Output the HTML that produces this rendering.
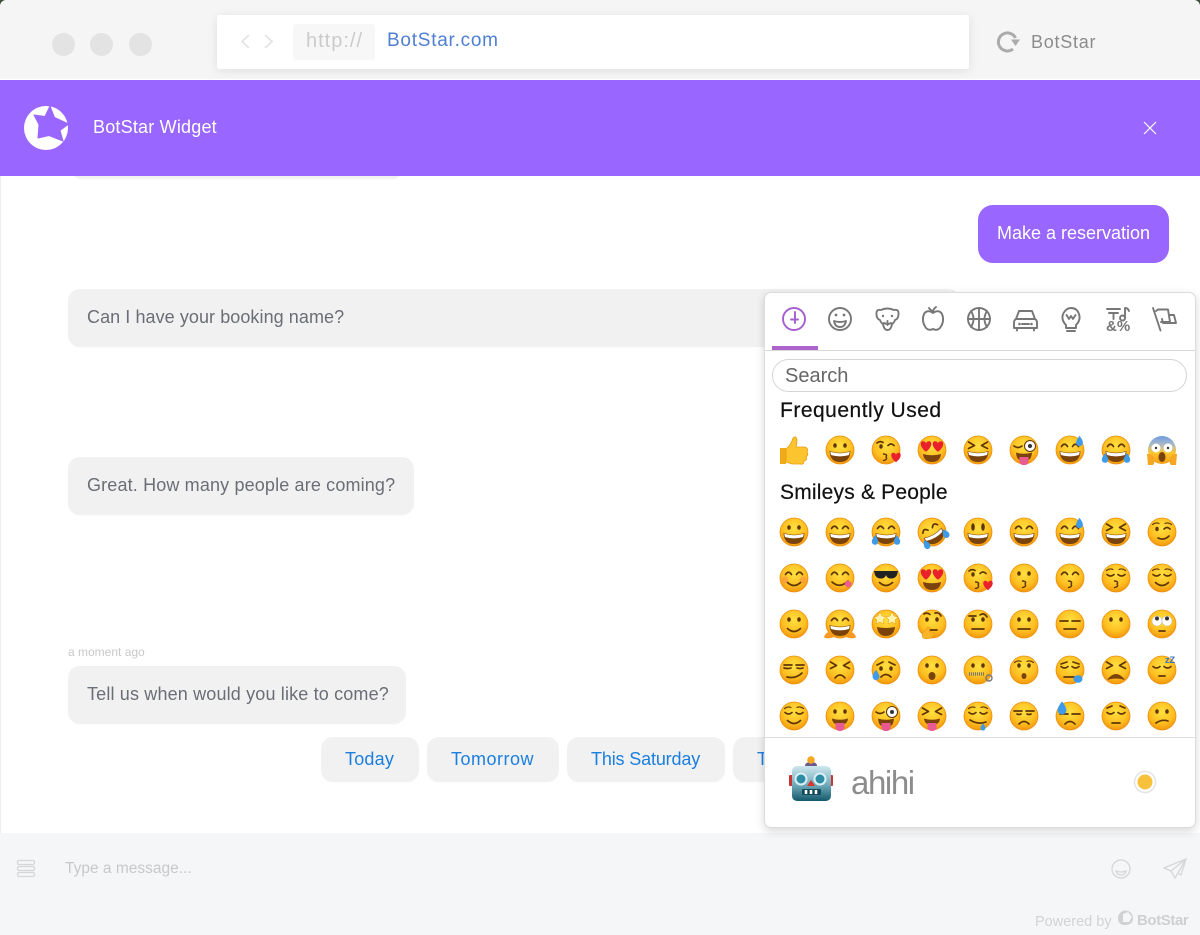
<!DOCTYPE html>
<html lang="en"><head><meta charset="utf-8"><title>BotStar Widget</title>
<style>
*{box-sizing:border-box}
html,body{margin:0;padding:0;background:#fff}
#p{position:relative;width:1200px;height:935px;overflow:hidden;background:#fff;font-family:"Liberation Sans",sans-serif}
#p div,#p span{position:absolute;white-space:nowrap}
.t{line-height:24px;height:24px}
.b{background:#f2f1f2;border-radius:12px;box-shadow:0 1px 1px rgba(0,0,0,.015)}
.m{font-size:18px;color:#6a6e75}
.q{font-size:18px;color:#1b7fe0}
svg{position:absolute;left:0;top:0;pointer-events:none}
.s{fill:none;stroke:#5f360a;stroke-width:1.7;stroke-linecap:round;stroke-linejoin:round}
.i{fill:none;stroke:#777;stroke-width:1.9;stroke-linecap:round;stroke-linejoin:round}
.d{fill:#5f360a}
</style></head><body><div id="p">
<div style="left:0;top:0;width:1200px;height:79px;background:#f5f5f5"></div>
<div style="left:52px;top:33px;width:23px;height:23px;border-radius:50%;background:#e3e3e3"></div>
<div style="left:90px;top:33px;width:23px;height:23px;border-radius:50%;background:#e3e3e3"></div>
<div style="left:129px;top:33px;width:23px;height:23px;border-radius:50%;background:#e3e3e3"></div>
<div style="left:217px;top:15px;width:752px;height:54px;background:#fff;border-radius:2px;box-shadow:0 2px 10px rgba(0,0,0,.09)"></div>
<div style="left:293px;top:24px;width:82px;height:36px;background:#f7f7f7;border-radius:3px"></div>
<span class="t" style="left:306px;top:29px;font-size:20px;color:#cbcbcb;letter-spacing:1px">http://</span>
<span class="t" style="left:387px;top:29px;font-size:19px;color:#4f7fd3;letter-spacing:.75px">BotStar.com</span>
<span class="t" style="left:1031px;top:30px;font-size:18px;color:#8c8c8c;letter-spacing:.75px">BotStar</span>
<div class="b" style="left:72px;top:160px;width:330px;height:19px"></div>
<div style="left:0;top:80px;width:1200px;height:96px;background:#9966ff"></div>
<span class="t" style="left:93px;top:115px;font-size:18px;color:#fff;letter-spacing:.2px">BotStar Widget</span>
<div style="left:978px;top:205px;width:191px;height:58px;background:#9966ff;border-radius:15px"></div>
<span class="t" style="left:997px;top:221px;font-size:18px;color:#fff">Make a reservation</span>
<div class="b" style="left:68px;top:289px;width:892px;height:58px"></div>
<span class="t m" style="left:87px;top:305px;letter-spacing:.07px">Can I have your booking name?</span>
<div class="b" style="left:68px;top:457px;width:346px;height:58px"></div>
<span class="t m" style="left:87px;top:473px;letter-spacing:.15px">Great. How many people are coming?</span>
<span class="t" style="left:68px;top:640px;font-size:12px;color:#c9c9c9">a moment ago</span>
<div class="b" style="left:68px;top:666px;width:338px;height:58px"></div>
<span class="t m" style="left:87px;top:682px;letter-spacing:.16px">Tell us when would you like to come?</span>
<div class="b" style="left:321px;top:737px;width:98px;height:45px"></div>
<span class="t q" style="left:345px;top:747px;letter-spacing:.2px">Today</span>
<div class="b" style="left:427px;top:737px;width:132px;height:45px"></div>
<span class="t q" style="left:451px;top:747px;letter-spacing:.5px">Tomorrow</span>
<div class="b" style="left:567px;top:737px;width:158px;height:45px"></div>
<span class="t q" style="left:591px;top:747px;letter-spacing:-.15px">This Saturday</span>
<div class="b" style="left:733px;top:737px;width:120px;height:45px"></div>
<span class="t q" style="left:757px;top:747px">T</span>
<div style="left:0;top:176px;width:1px;height:657px;background:#eee"></div>
<div style="left:0;top:833px;width:1200px;height:102px;background:#f5f6f8"></div>
<span class="t" style="left:65px;top:857px;font-size:15.5px;color:#c6c8ca">Type a message...</span>
<span class="t" style="left:1035px;top:910px;font-size:14.5px;color:#d2d3d5">Powered by</span>
<span class="t" style="left:1137px;top:909px;font-size:15px;font-weight:bold;color:#cfd0d2;letter-spacing:-.4px">BotStar</span>
<div style="left:764px;top:292px;width:432px;height:536px;background:#fff;border:1px solid #dcdcdc;border-radius:7px;box-shadow:0 3px 9px rgba(0,0,0,.16)"></div>
<div style="left:765px;top:350px;width:430px;height:1px;background:#d8d8d8"></div>
<div style="left:772px;top:346px;width:46px;height:4px;background:#ad62cc"></div>
<div style="left:772px;top:359px;width:415px;height:33px;border:1px solid #d4d4d4;border-radius:17px;background:#fff"></div>
<span class="t" style="left:785px;top:364px;font-size:20px;color:#666">Search</span>
<span class="t" style="left:780px;top:399px;font-size:21px;color:#111;letter-spacing:.5px;-webkit-text-stroke:.2px #111">Frequently Used</span>
<span class="t" style="left:780px;top:481px;font-size:21px;color:#111;letter-spacing:.2px;-webkit-text-stroke:.2px #111">Smileys &amp; People</span>
<div style="left:765px;top:737px;width:430px;height:1px;background:#dedede"></div>
<span style="left:851px;top:762px;font-size:33px;line-height:42px;color:#8c8c8c;letter-spacing:-1.4px">ahihi</span>

<svg width="1200" height="935" viewBox="0 0 1200 935" xmlns="http://www.w3.org/2000/svg">
<defs>
<radialGradient id="fg" cx=".5" cy=".36" r=".66"><stop offset="0" stop-color="#ffe03f"/><stop offset=".62" stop-color="#fdbf22"/><stop offset="1" stop-color="#f2930a"/></radialGradient>
<linearGradient id="rb" x1="0" y1="0" x2="0" y2="1"><stop offset="0" stop-color="#cfe7ee"/><stop offset=".55" stop-color="#6ea9b8"/><stop offset="1" stop-color="#145a6c"/></linearGradient>
<linearGradient id="sc" x1="0" y1="0" x2="0" y2="1"><stop offset="0" stop-color="#6f9be0"/><stop offset=".3" stop-color="#a8b9c8"/><stop offset=".6" stop-color="#fcc62b"/><stop offset="1" stop-color="#f5a012"/></linearGradient>
<circle id="F" r="14" fill="url(#fg)" stroke="#ec8f0c" stroke-width=".8"/>
<g id="ed"><ellipse class="d" cx="-5" cy="-4.5" rx="1.8" ry="2.3"/><ellipse class="d" cx="5" cy="-4.5" rx="1.8" ry="2.3"/></g>
<g id="et"><ellipse class="d" cx="-5" cy="-5" rx="1.8" ry="3.8"/><ellipse class="d" cx="5" cy="-5" rx="1.8" ry="3.8"/></g>
<path id="eh" class="s" d="M-8.500-3.500Q-5.500-8-2.500-3.500M2.500-3.500Q5.500-8 8.500-3.500"/>
<path id="ex" class="s" d="M-9.500-8L-3.500-4.500L-9.500-1.500M9.500-8L3.500-4.500L9.500-1.500"/>
<path id="ec" class="s" d="M-9-3.500Q-5.500-.5-2-3.500M2-3.500Q5.500-.5 9-3.500"/>
<path id="br" class="s" style="stroke-width:1.1" d="M-9.500-7.500Q-6-10-3-8.500M3-8.500Q6-10 9.500-7.500"/>
<g id="mg"><path d="M-10.500 1Q0 4.500 10.500 1Q10 12 0 12Q-10 12-10.500 1Z" fill="#7a430c"/><path d="M-9.800 1.800Q0 4.800 9.800 1.800L9 5Q0 7.800-9 5Z" fill="#fff"/></g>
<path id="ms" class="s" d="M-6.500 4.500Q0 10.500 6.500 4.500"/>
<path id="mk" class="s" style="stroke-width:1.4" d="M-1.500 3Q3 3.500 1 6Q3 8.500-1.500 9.500"/>
<path id="mt" d="M-8 2.500Q0 5 8 2.500Q7.500 9 4.500 10Q4.500 15 0 15Q-4.500 15-4.500 10Q-7.500 9-8 2.500Z" fill="#7a430c"/>
<path id="tg" d="M-4.500 7H4.500V11Q4.500 15 0 15Q-4.500 15-4.500 11Z" fill="#e95a95"/>
<path id="dr" d="M0-6Q4-1 4 2A4 4 0 0 1-4 2Q-4-1 0-6Z" fill="#3e9be8"/>
<path id="ht" d="M0 5C-8-1-6-7-2.500-6C-1-5.800 0-4.500 0-3.500C0-4.500 1-5.800 2.500-6C6-7 8-1 0 5Z" fill="#e8212b"/>
<g id="h"><use href="#F"/><use href="#ex" /><use href="#mg"/></g>
<g id="a1"><use href="#F"/><use href="#ed"/><use href="#mg"/></g>
<g id="a2"><use href="#F"/><use href="#eh"/><use href="#mg"/></g>
<g id="a3"><use href="#a2"/><use href="#dr" transform="translate(-11 8) scale(.8)"/><use href="#dr" transform="translate(11 8) scale(.8)"/></g>
<g id="a6"><use href="#a2"/><use href="#dr" transform="translate(9.500 -9) scale(.85)"/></g>
<g id="kh"><use href="#F"/><path class="s" d="M-9-7Q-6-9.500-3-7.500M2-4.500Q5-7.500 8-4.500"/><ellipse class="d" cx="-5" cy="-3.500" rx="1.700" ry="2.200"/><use href="#mk" transform="translate(-1 1)"/><use href="#ht" transform="translate(10 8) scale(.85)"/></g>
<g id="he"><use href="#F"/><use href="#ht" transform="translate(-6 -3) scale(.95)"/><use href="#ht" transform="translate(6 -3) scale(.95)"/><path d="M-9 4Q0 6.500 9 4Q8 12 0 12Q-8 12-9 4Z" fill="#7a430c"/></g>
<g id="wt"><use href="#F"/><circle cx="6" cy="-4" r="5.500" fill="#fff" stroke="#5f360a"/><circle cx="6" cy="-4" r="2" fill="#333"/><path class="s" d="M-10-4Q-6-1-2-4"/><use href="#mt"/><use href="#tg"/></g>
</defs>

<!-- window corners -->
<path d="M0 0H5Q1 1 0 5Z" fill="#3f4f3c"/><path d="M1200 0H1195Q1199 1 1200 5Z" fill="#3f4f3c"/>
<!-- browser icons -->
<path d="M249 35L242 41.500L249 48" fill="none" stroke="#e4e4e4" stroke-width="1.800"/>
<path d="M265 35L272 41.500L265 48" fill="none" stroke="#e4e4e4" stroke-width="1.800"/>
<path d="M1013 49A9 9 0 1 1 1015.500 38" fill="none" stroke="#ababab" stroke-width="3"/>
<path d="M1011 39.500H1020L1015.500 46Z" fill="#ababab"/>
<!-- logo -->
<circle cx="46" cy="128" r="22" fill="#fff"/>
<path d="M50 106L54.500 117.500L68.500 124L60 130.500L63 141L49 135.500L38 138L39 124.500L34 115L45 116.500Z" fill="#9966ff" stroke="#9966ff" stroke-linejoin="round" stroke-width="1"/>
<path d="M1144 122L1156 134M1156 122L1144 134" stroke="#fff" stroke-width="1.200" fill="none"/>

<!-- tab icons -->
<g class="i">
<g style="stroke:#a55fd0"><circle cx="794" cy="319" r="11"/><path d="M795 312V323M791 319.500H798"/></g>
<circle cx="840" cy="319" r="11"/><path d="M834 321Q840 323 846 321Q845 327 840 327Q835 327 834 321Z"/>
<path d="M881 310Q887 307 894 310Q899 309 898.500 314Q898.500 319 895 320Q894 323 892 324Q891 330 887.500 330Q884 330 883 324Q881 323 880 320Q876.500 319 876.500 314Q876 309 881 310ZM884 323Q887.500 325 891 323M887.500 321V325"/>
<path d="M933 313Q927 309 924 314Q921 321 926 328Q929 331 933 329Q937 331 940 328Q945 321 942 314Q939 309 933 313ZM933 313Q933 309 936 307M933 311Q930 310 929 308"/>
<circle cx="979" cy="319" r="11"/><path d="M979 308V330M968 319H990M971 311Q976 319 971 327M987 311Q982 319 987 327"/>
<path d="M1016 319L1019 311H1032L1035 319M1016 319Q1014 320 1014 323V328H1037V323Q1037 320 1035 319ZM1016 319H1035M1017 328V330.500M1034 328V330.500M1022 324H1029"/>
<path d="M1066 325Q1061 320 1063 314Q1066 308 1071 308Q1077 308 1079 314Q1081 320 1076 325V328H1066ZM1067 331H1075M1066.500 315L1069 319L1071 316L1073 319L1075.500 315"/>
<path d="M1107 309H1120M1113.500 313V319M1109 313H1118M1125 318V308Q1128 308 1129 311"/><circle cx="1122.500" cy="318" r="2.500"/>
<path d="M1153 308L1160.500 330.500M1156 311L1158 309.500H1168L1170 322H1161M1170 315H1174L1176 323H1163L1162 319"/>
</g>
<circle cx="836" cy="315" r="1.400" fill="#777"/><circle cx="844" cy="315" r="1.400" fill="#777"/>
<circle cx="883" cy="316" r="1.200" fill="#777"/><circle cx="892" cy="316" r="1.200" fill="#777"/><circle cx="1019.500" cy="324" r="1.300" fill="#777"/><circle cx="1031.500" cy="324" r="1.300" fill="#777"/>
<text x="1106" y="331" font-family="Liberation Sans,sans-serif" font-size="15" font-weight="bold" fill="#777">&amp;%</text>

<!-- row: frequently used -->
<g transform="translate(794 450)"><path d="M-14 -2H-8V14H-14Z" fill="#f0ab1a"/><path d="M-8-1Q-3-5-1-12Q2-15 3-10Q3-6 2-3H11Q15-1 13 2Q15 5 12 7Q14 10 10 11Q10 15 6 14H-2L-8 12Z" fill="#fcc52f" stroke="#ea9a10" stroke-width=".8"/></g>
<use href="#a1" x="840" y="450"/><use href="#kh" x="886" y="450"/><use href="#he" x="932" y="450"/><use href="#h" x="978" y="450"/><use href="#wt" x="1024" y="450"/><use href="#a6" x="1070" y="450"/><use href="#a3" x="1116" y="450"/>
<g transform="translate(1162 450)"><circle r="14" fill="url(#sc)"/><circle cx="-6" cy="-2" r="4.500" fill="#fff"/><circle cx="6" cy="-2" r="4.500" fill="#fff"/><circle cx="-6" cy="-2" r="1.200" fill="#333"/><circle cx="6" cy="-2" r="1.200" fill="#333"/><ellipse cy="7" rx="3.500" ry="5" fill="#7a430c"/><path d="M-15 4Q-11 3-8 8Q-7 13-9 15H-14ZM15 4Q11 3 8 8Q7 13 9 15H14Z" fill="#f5a623"/></g>

<!-- row 1 -->
<use href="#a1" x="794" y="532"/><use href="#a2" x="840" y="532"/><use href="#a3" x="886" y="532"/><use href="#a3" transform="translate(932 532) rotate(-30)"/>
<g transform="translate(978 532)"><use href="#F"/><use href="#et"/><use href="#mg"/></g>
<use href="#a2" x="1024" y="532"/><use href="#a6" x="1070" y="532"/><use href="#h" x="1116" y="532"/>
<g transform="translate(1162 532)"><use href="#F"/><use href="#br"/><ellipse class="d" cx="-5" cy="-3" rx="1.700" ry="2.200"/><path class="s" d="M2-3Q5-6 8-3M-4 6Q2 9 7 4"/></g>
<!-- row 2 -->
<g transform="translate(794 578)"><use href="#F"/><circle cx="-9" cy="2" r="3.500" fill="#f98a4e" opacity=".5"/><circle cx="9" cy="2" r="3.500" fill="#f98a4e" opacity=".5"/><use href="#eh"/><use href="#ms"/></g>
<g transform="translate(840 578)"><use href="#F"/><use href="#eh"/><path class="s" d="M-8 4Q0 11 8 3"/><rect x="5" y="3" width="6" height="6" rx="2" transform="rotate(40 8 6)" fill="#ee5b92"/></g>
<g transform="translate(886 578)"><use href="#F"/><path d="M-12-7H12L11-3Q9 1 4 .5Q1 0 0-3Q-1 0-4 .5Q-9 1-11-3Z" fill="#222"/><use href="#ms"/></g>
<use href="#he" x="932" y="578"/><use href="#kh" x="978" y="578"/>
<g transform="translate(1024 578)"><use href="#F"/><use href="#ed"/><use href="#mk" transform="translate(0 0)"/></g>
<g transform="translate(1070 578)"><use href="#F"/><use href="#eh"/><use href="#mk"/></g>
<g transform="translate(1116 578)"><use href="#F"/><use href="#br"/><use href="#ec"/><use href="#mk"/></g>
<g transform="translate(1162 578)"><use href="#F"/><use href="#br"/><use href="#ec"/><use href="#ms"/></g>
<!-- row 3 -->
<g transform="translate(794 624)"><use href="#F"/><use href="#ed"/><use href="#ms"/></g>
<g transform="translate(840 624)"><use href="#F"/><use href="#eh"/><use href="#mg"/><path d="M-16 13Q-13 6-9 9L-6 13Q-10 15-15 14ZM16 13Q13 6 9 9L6 13Q10 15 15 14Z" fill="#f59b23"/></g>
<g transform="translate(886 624)"><use href="#F"/><path d="M-6-12L-4-8L0-7L-3-4L-2 0L-6-2L-10 0L-9-4L-12-7L-8-8ZM6-12L8-8L12-7L9-4L10 0L6-2L2 0L3-4L0-7L4-8Z" fill="#fff3b0" stroke="#e99a10" stroke-width=".5"/><path d="M-9 3Q0 5 9 3Q8 12 0 12Q-8 12-9 3Z" fill="#7a430c"/></g>
<g transform="translate(932 624)"><use href="#F"/><use href="#ed"/><path class="s" d="M-8-10Q-5-12-2-9.500M3-11Q7-12 9-8M-2 6H5"/><path d="M-9 14Q-11 8-7 7L-4 3L-2 4L-3 8H2Q3 12 0 13Q-4 16-9 14Z" fill="#f9b428" stroke="#e8960e" stroke-width=".6"/></g>
<g transform="translate(978 624)"><use href="#F"/><use href="#ed"/><path class="s" d="M-9-8H-2M2-9Q6-12 9-7M-6 5H6"/></g>
<g transform="translate(1024 624)"><use href="#F"/><use href="#ed"/><path class="s" d="M-6 5H6"/></g>
<g transform="translate(1070 624)"><use href="#F"/><path class="s" d="M-10-3H-2M2-3H10M-6 5H6"/></g>
<g transform="translate(1116 624)"><use href="#F"/><use href="#ed"/></g>
<g transform="translate(1162 624)"><use href="#F"/><circle cx="-5" cy="-3" r="5" fill="#fff" stroke="#bbb" stroke-width=".5"/><circle cx="5" cy="-3" r="5" fill="#fff" stroke="#bbb" stroke-width=".5"/><circle cx="-5" cy="-5.500" r="2" fill="#333"/><circle cx="5" cy="-5.500" r="2" fill="#333"/><path class="s" d="M-3 7H3"/></g>
<!-- row 4 -->
<g transform="translate(794 670)"><use href="#F"/><path class="s" d="M-10-5H-2M2-5H10M-10-2Q-6-1-3-2M3-2Q6-1 9-2M-7 7Q2 9 8 3"/></g>
<g transform="translate(840 670)"><use href="#F"/><use href="#ex"/><path class="s" d="M-5 8Q0 2 5 8"/></g>
<g transform="translate(886 670)"><use href="#F"/><path class="s" d="M-9-5L-3-8M9-5L3-8M-5 7Q0 2 5 7"/><use href="#ed" transform="translate(0 3)"/><use href="#dr" transform="translate(-10 5) scale(.85)"/></g>
<g transform="translate(932 670)"><use href="#F"/><use href="#ed"/><ellipse cy="6" rx="3.500" ry="4" fill="#7a430c"/></g>
<g transform="translate(978 670)"><use href="#F"/><use href="#ed"/><path d="M-9 4H7" stroke="#777" stroke-width="3.500" stroke-dasharray="1 1"/><circle cx="11" cy="8" r="3" fill="none" stroke="#777" stroke-width="1.400"/></g>
<g transform="translate(1024 670)"><use href="#F"/><use href="#ed"/><use href="#br"/><ellipse cy="6" rx="2.500" ry="3" fill="#7a430c"/></g>
<g transform="translate(1070 670)"><use href="#F"/><path class="s" d="M-9-6L-3-8M9-6L3-8"/><use href="#ec"/><path class="s" d="M-6 7H4"/><ellipse cx="8" cy="9" rx="4.500" ry="3.800" fill="#3e9be8"/></g>
<g transform="translate(1116 670)"><use href="#F"/><use href="#ex"/><path d="M-9 10Q0-2 9 10Q0 7-9 10Z" fill="#7a430c"/></g>
<g transform="translate(1162 670)"><use href="#F"/><use href="#ec"/><path class="s" d="M-3 6H3"/><text x="3" y="-7" font-family="Liberation Sans,sans-serif" font-weight="bold" font-size="9" fill="#3a6fc9">zZ</text></g>
<!-- row 5 -->
<g transform="translate(794 716)"><use href="#F"/><use href="#br"/><use href="#ec"/><use href="#ms"/></g>
<g transform="translate(840 716)"><use href="#F"/><use href="#ed"/><path d="M-8 2.500Q0 5 8 2.500Q7.500 9 0 9Q-7.500 9-8 2.500Z" fill="#7a430c"/><use href="#tg"/></g>
<use href="#wt" x="886" y="716"/>
<g transform="translate(932 716)"><use href="#F"/><use href="#ex"/><path d="M-8 2.500Q0 5 8 2.500Q7.500 9 0 9Q-7.500 9-8 2.500Z" fill="#7a430c"/><use href="#tg"/></g>
<g transform="translate(978 716)"><use href="#F"/><use href="#br"/><use href="#ec"/><path class="s" d="M-8 4Q0 9 8 6"/><use href="#dr" transform="translate(5 11) scale(.6)"/></g>
<g transform="translate(1024 716)"><use href="#F"/><path class="s" d="M-10-5H-2M2-5H10M-7-2Q-5-1-3-2M3-2Q5-1 7-2M-5 8Q0 3 5 8"/></g>
<g transform="translate(1070 716)"><use href="#F"/><path class="s" d="M-10-2H-2M2-2H10M-5 8Q0 3 5 8"/><use href="#dr" transform="translate(-8 -8) scale(1.100)"/></g>
<g transform="translate(1116 716)"><use href="#F"/><use href="#ec"/><path class="s" d="M-9-8L-4-10M9-8L4-10M-4 7H4"/></g>
<g transform="translate(1162 716)"><use href="#F"/><use href="#ed"/><path class="s" d="M-6 7Q0 3 6 5"/></g>

<!-- robot -->
<rect x="789" y="775" width="5" height="11" rx="1" fill="#c33"/><rect x="828" y="775" width="5" height="11" rx="1" fill="#c33"/>
<rect x="792" y="766" width="39" height="35" rx="5" fill="url(#rb)"/>
<path d="M805 766Q805 762 811 762Q817 762 817 766Z" fill="#6b5a8e"/><circle cx="811" cy="760" r="3.800" fill="#f5a623"/>
<circle cx="801" cy="779" r="5.500" fill="#2f8ca5" stroke="#d9f1f6" stroke-width="2"/><circle cx="820" cy="779" r="5.500" fill="#2f8ca5" stroke="#d9f1f6" stroke-width="2"/>
<path d="M811 780L815 786H807Z" fill="#d9342b"/>
<rect x="802" y="789" width="19" height="6" rx="1.500" fill="#134a5a"/><path d="M806 790V794M811 790V794M816 790V794" stroke="#fff" stroke-width="2.500"/>
<circle cx="1145" cy="782" r="10.500" fill="#fff" stroke="#e4e4e4" stroke-width="1.500"/><circle cx="1145" cy="782" r="7.500" fill="#f8c13c"/>

<!-- footer icons -->
<g fill="none" stroke="#d5d6d8" stroke-width="1.300"><rect x="17.500" y="860.500" width="17" height="4" rx="1.500"/><rect x="17.500" y="866.500" width="17" height="4" rx="1.500"/><rect x="17.500" y="872.500" width="17" height="4" rx="1.500"/>
<circle cx="1121" cy="869" r="9"/><path d="M1116 871Q1121 873 1126 871Q1125 875 1121 875Q1117 875 1116 871ZM1117.500 866H1118M1124 866H1124.500"/>
<path d="M1186 859L1164 868L1171 871L1175 878L1178 873L1181 875ZM1171 871L1186 859L1178 873"/></g>
<path d="M1118 918A7.500 7.500 0 1 1 1133 918Q1133 925 1125 925Q1118 925 1118 918Z" fill="#d0d1d3"/><path d="M1123 914L1128 912L1132 917L1129 922H1123Z" fill="#f5f6f8"/>
</svg>
</div></body></html>
